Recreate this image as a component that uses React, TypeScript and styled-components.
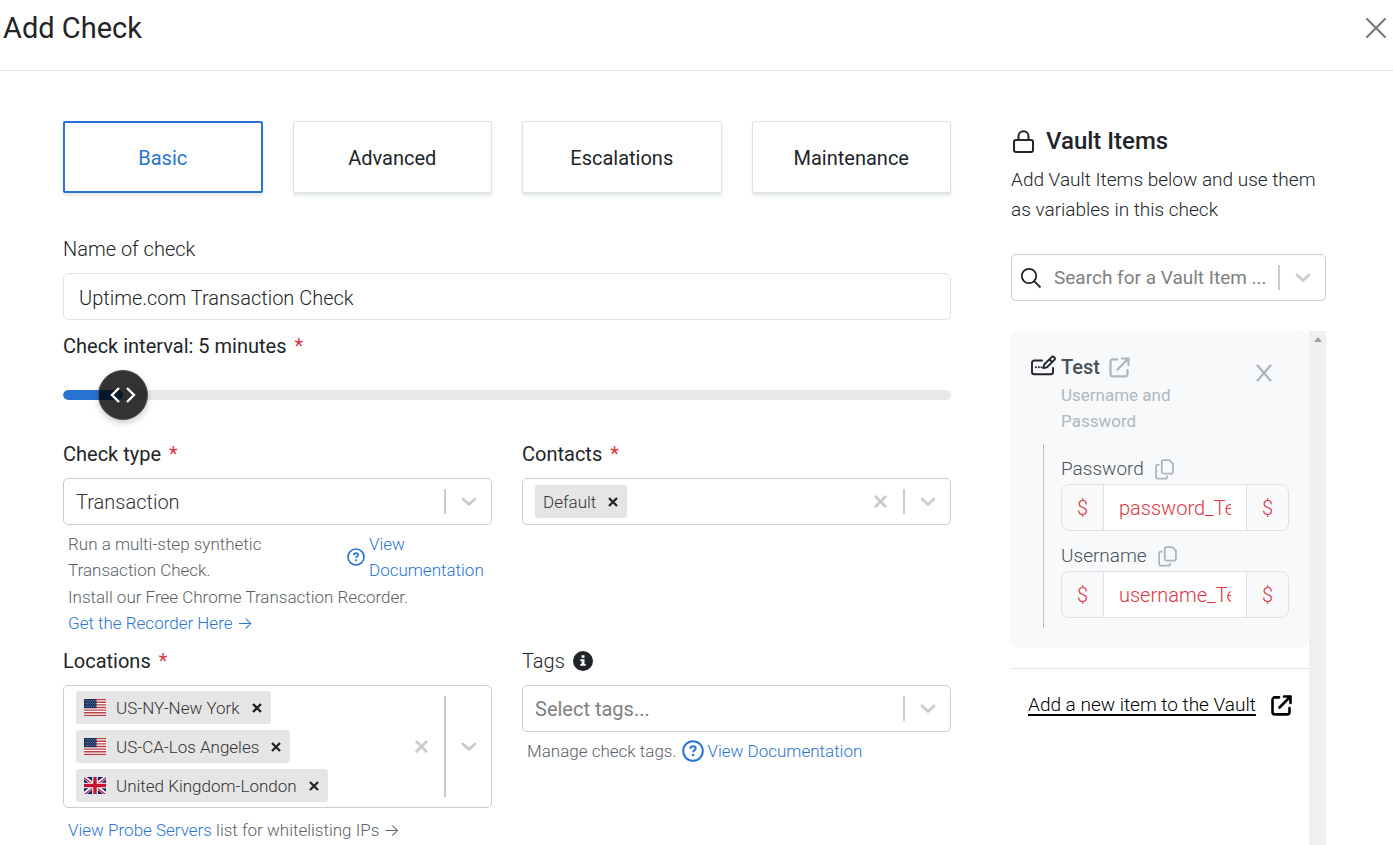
import React, { useState } from "react";
import styled, { createGlobalStyle } from "styled-components";

const Global = createGlobalStyle`
  *, *::before, *::after { box-sizing: border-box; }
  html, body { margin: 0; background: #fff; }
  body { font-family: Roboto, "Liberation Sans", sans-serif; font-size: 20px; line-height: 30px; font-weight: 300; color: #212529; }
  button, input, select { font: inherit; color: inherit; margin: 0; }
  button { background: none; border: 0; padding: 0; cursor: pointer; }
  h1, h2, h3, p, ul { margin: 0; padding: 0; }
  svg { display: block; flex: none; }
  a { color: #2974d3; text-decoration: none; }
`;

const Page = styled.div`
  min-height: 100vh;
  display: flex;
  flex-direction: column;
`;
const Header = styled.header`
  display: flex;
  justify-content: space-between;
  align-items: center;
  padding: 8px 7px 22px 3px;
  border-bottom: 1px solid #dee2e6;
`;
const Title = styled.h1`
  font-size: 29px;
  line-height: 40px;
  font-weight: 400;
`;
const Body = styled.div`
  flex: 1;
  display: grid;
  grid-template-columns: minmax(0, 1fr) 315px;
  column-gap: 60px;
  padding: 50px 67px 0 63px;
`;
const Form = styled.form`
  min-width: 0;
`;
const Tabs = styled.div`
  display: grid;
  grid-template-columns: repeat(4, 1fr);
  gap: 30px;
  margin-bottom: 41px;
`;
const Tab = styled.button<{ $active?: boolean }>`
  height: 72px;
  padding-top: 2px;
  font-weight: 400;
  color: ${(p) => (p.$active ? "#2974d3" : "#212529")};
  background: #fff;
  border: ${(p) => (p.$active ? "2px solid #2974d3" : "1px solid #dce1e6")};
  border-radius: 2px;
  box-shadow: 0 3px 3px rgba(60, 80, 100, 0.12);
`;
const Label = styled.label<{ $strong?: boolean }>`
  display: flex;
  align-items: center;
  gap: 8px;
  margin-bottom: 9px;
  font-weight: ${(p) => (p.$strong ? 400 : 300)};
`;
const Star = styled.span`
  color: #dc3545;
`;
const NameInput = styled.input`
  display: block;
  width: 100%;
  height: 47px;
  padding: 2px 15px 0;
  margin-bottom: 11px;
  border: 1px solid #dee2e6;
  border-radius: 6px;
  background: #fff;
`;
const Slider = styled.div`
  position: relative;
  height: 50px;
  margin-bottom: 19px;
  display: flex;
  align-items: center;
`;
const Track = styled.div`
  flex: 1;
  height: 10px;
  border-radius: 5px;
  background: #e8e8e8;
  overflow: hidden;
`;
const Fill = styled.div`
  height: 100%;
  border-radius: 5px;
  background: #2974d3;
`;
const Range = styled.input`
  appearance: none;
  position: absolute;
  inset: 0;
  width: 100%;
  height: 50px;
  background: transparent;
  &::-webkit-slider-thumb {
    appearance: none;
    width: 50px;
    height: 50px;
    border-radius: 50%;
    background: rgba(0, 0, 0, 0.8);
    border: 1px solid #495057;
    box-shadow: 0 3px 6px rgba(0, 0, 0, 0.2);
  }
`;
const Grip = styled.svg`
  position: absolute;
  transform: translateX(-50%);
  pointer-events: none;
`;
const Fields = styled.div`
  display: grid;
  grid-template-columns: repeat(2, minmax(0, 1fr));
  column-gap: 30px;
  row-gap: 10px;
`;
const Field = styled.div`
  min-width: 0;
`;
const Control = styled.div`
  display: flex;
  align-items: stretch;
  min-height: 47px;
  border: 1px solid #ccc;
  border-radius: 5px;
  background: #fff;
`;
const Select = styled.select<{ $muted?: boolean; $small?: boolean }>`
  appearance: none;
  flex: 1;
  min-width: 0;
  padding: 0 0 0 12px;
  border: 0;
  background: transparent;
  font-size: ${(p) => (p.$small ? 19 : 20)}px;
  font-weight: ${(p) => (p.$muted ? 400 : 300)};
  color: ${(p) => (p.$muted ? "#808080" : "#333")};
`;
const Divider = styled.span`
  width: 2px;
  margin: 10px 0;
  background: #ccc;
`;
const Toggle = styled.span`
  width: 45px;
  display: flex;
  align-items: center;
  justify-content: center;
  color: #ccc;
`;
const IconButton = styled.button`
  width: 45px;
  display: flex;
  align-items: center;
  justify-content: center;
  color: #ccc;
`;
const Chips = styled.ul`
  && { padding: 5px 12px; }
  flex: 1;
  display: flex;
  flex-direction: column;
  align-items: flex-start;
  justify-content: center;
  gap: 6px;
  list-style: none;
`;
const Chip = styled.li`
  display: flex;
  align-items: center;
  height: 33px;
  padding-left: 8px;
  border-radius: 3px;
  background: #e5e5e5;
  font-size: 17px;
  color: #333;
  svg + span { margin-left: 10px; }
`;
const ChipRemove = styled.button`
  width: 28px;
  height: 33px;
  margin-left: 3px;
  display: flex;
  align-items: center;
  justify-content: center;
  color: #212529;
`;
const Help = styled.div<{ $loose?: boolean }>`
  display: grid;
  row-gap: 1px;
  padding: ${(p) => (p.$loose ? 9 : 6)}px 5px 0;
  font-size: 17px;
  line-height: 26px;
  color: #5c6166;
`;
const HelpRow = styled.div<{ $spread?: boolean }>`
  display: flex;
  align-items: center;
  gap: 5px;
  justify-content: ${(p) => (p.$spread ? "space-between" : "flex-start")};
`;
const HelpText = styled.p`
  max-width: 220px;
`;
const Arrow = styled.span`
  font-family: Inter, "DejaVu Sans", sans-serif;
`;
const DocLink = styled.a<{ $narrow?: boolean }>`
  display: flex;
  align-items: center;
  gap: 4px;
  width: ${(p) => (p.$narrow ? "140px" : "auto")};
`;
const Side = styled.aside`
  display: flex;
  flex-direction: column;
  min-width: 0;
`;
const SideTitle = styled.h2`
  display: flex;
  align-items: center;
  gap: 10px;
  margin-bottom: 4px;
  font-size: 24px;
  line-height: 40px;
  font-weight: 500;
`;
const SideText = styled.p`
  margin-bottom: 29px;
  font-size: 19px;
`;
const SearchControl = styled(Control)`
  margin-bottom: 30px;
  & > svg { align-self: center; margin-left: 8px; }
`;
const ListArea = styled.div`
  flex: 1;
  display: flex;
`;
const List = styled.div`
  flex: 1;
  min-width: 0;
`;
const ScrollBar = styled.div`
  width: 17px;
  padding-top: 6px;
  display: flex;
  justify-content: center;
  background: #f0f0f0;
`;
const Card = styled.section`
  padding: 21px 20px 20px;
  border-radius: 8px;
  background: #f8f9fb;
`;
const CardHead = styled.div`
  display: flex;
  align-items: flex-start;
  gap: 5px;
  padding-bottom: 10px;
  & > svg { margin-top: 3px; }
`;
const CardInfo = styled.div`
  flex: 1;
`;
const CardTitle = styled.h3`
  display: flex;
  align-items: center;
  gap: 9px;
  font-size: 20px;
  font-weight: 500;
  color: #495057;
  a { color: #adb5bd; }
`;
const CardKind = styled.p`
  max-width: 120px;
  font-size: 17px;
  line-height: 26px;
  font-weight: 400;
  color: #b0b7bf;
`;
const RemoveItem = styled.button`
  width: 50px;
  height: 42px;
  display: flex;
  align-items: center;
  justify-content: center;
  color: #adb5bd;
`;
const Variables = styled.div`
  margin-left: 12px;
  padding: 10px 0 10px 17px;
  border-left: 1px solid #babfc5;
  display: grid;
  grid-template-columns: minmax(0, 1fr);
  gap: 10px;
`;
const VarLabel = styled.div`
  display: flex;
  align-items: center;
  gap: 11px;
  font-size: 19px;
  color: #495057;
  button { color: #adb5bd; }
`;
const Group = styled.div`
  display: flex;
  height: 47px;
  border: 1px solid #dee2e6;
  border-radius: 8px;
  overflow: hidden;
  color: #dc3545;
`;
const Affix = styled.span`
  width: 41px;
  flex: none;
  display: flex;
  align-items: center;
  justify-content: center;
`;
const VarInput = styled.input`
  flex: 1;
  min-width: 0;
  padding: 0 15px;
  border: solid #dee2e6;
  border-width: 0 1px;
  border-radius: 0;
  background: #fff;
`;
const AddRow = styled.div`
  margin-top: 20px;
  padding: 21px 17px 0;
  border-top: 1px solid #dee2e6;
`;
const AddLink = styled.a`
  display: flex;
  align-items: center;
  justify-content: space-between;
  color: #000;
  font-size: 19px;
  white-space: nowrap;
  span { text-decoration: underline; text-decoration-thickness: 2px; text-underline-offset: 3px; }
`;

const Chevron = () => (
  <svg width="16" height="10" viewBox="0 0 16 10" fill="none" stroke="currentColor" strokeWidth="2.8" strokeLinecap="round" strokeLinejoin="round"><path d="M2 2l6 5.4L14 2" /></svg>
);
const Cross = () => (
  <svg width="13" height="13" viewBox="0 0 13 13" fill="none" stroke="currentColor" strokeWidth="3" strokeLinecap="round"><path d="M1.8 1.8l9.4 9.4M11.2 1.8l-9.4 9.4" /></svg>
);
const RemoveCross = () => (
  <svg width="16" height="18" viewBox="0 0 16 18" fill="none" stroke="currentColor" strokeWidth="2.2" strokeLinecap="round"><path d="M1.5 1.5l13 15M14.5 1.5l-13 15" /></svg>
);
const ChipCross = () => (
  <svg width="10" height="10" viewBox="0 0 10 10" fill="none" stroke="currentColor" strokeWidth="2.3"><path d="M1 1l8 8M9 1l-8 8" /></svg>
);
const HelpIcon = ({ size }: { size: number }) => (
  <svg width={size} height={size} viewBox="0 0 22 22" fill="none" stroke="currentColor" strokeWidth="2"><circle cx="11" cy="11" r="9.8" /><path d="M8.3 8.8c0-1.7 1.2-2.5 2.7-2.5s2.7.9 2.7 2.2c0 1.8-2.6 1.8-2.6 3.7" /><path d="M11.1 13.9v2.2" strokeWidth="2.3" /></svg>
);
const InfoIcon = () => (
  <svg width="20" height="20" viewBox="0 0 20 20"><circle cx="10" cy="10" r="10" fill="#212529" /><path fill="#fff" d="M8.6 4.2h2.9v2.5H8.6zM7.3 8.2h4.2v4.7h1.2v1.9H7.3v-1.9h1.3v-2.8H7.3z" /></svg>
);
const ExternalIcon = ({ weight = 2.2 }: { weight?: number }) => (
  <svg width="21" height="21" viewBox="0 0 21 21" fill="none" stroke="currentColor" strokeWidth={weight} strokeLinecap="round" strokeLinejoin="round"><path d="M8 2.4H3.8c-1.3 0-2.3 1-2.3 2.3v12.4c0 1.3 1 2.3 2.3 2.3h12.4c1.3 0 2.3-1 2.3-2.3V13" /><path d="M8.5 12.5l11-11M13 1.5h6.5V8" /></svg>
);
const CopyIcon = () => (
  <svg width="19" height="21" viewBox="0 0 19 21" fill="none" stroke="currentColor" strokeWidth="1.8" strokeLinecap="round" strokeLinejoin="round"><path d="M8.7 1.2h5.6l3.6 3.4v8.1c0 1.1-.8 1.9-1.9 1.9H8.7c-1.1 0-1.9-.8-1.9-1.9V3.1c0-1.1.8-1.9 1.9-1.9z" /><path d="M3.8 5.700H3c-1.1 0-1.900.8-1.900 1.900v10.200c0 1.100.8 1.900 1.900 1.900h7.300c1.100 0 1.900-.8 1.900-1.900v-.3" /></svg>
);
const LockIcon = () => (
  <svg width="25" height="25" viewBox="0 0 25 25" fill="none" stroke="currentColor" strokeWidth="2"><rect x="3" y="11" width="19" height="12" rx="2" /><path d="M7.500 11V7.200a5 5 0 0 1 10 0V11" /></svg>
);
const SearchIcon = () => (
  <svg width="22" height="22" viewBox="0 0 22 22" fill="none" stroke="#212529" strokeWidth="1.800"><circle cx="9" cy="9" r="7.200" /><path d="M14.200 14.200l6.300 6.300" /></svg>
);
const CredentialIcon = () => (
  <svg width="25" height="21" viewBox="0 0 25 21" fill="none" stroke="currentColor" strokeWidth="1.900" strokeLinecap="round" strokeLinejoin="round"><path d="M11 5.500H3.400C2 5.500 1 6.400 1 7.800v9.100c0 1.300 1 2.300 2.400 2.300h16.300c1.300 0 2.300-1 2.300-2.300v-4" /><path d="M13.200 9.500l7.500-7.400c1.500-1.500 4.300 1 2.700 2.800l-7.500 7.400-3.500.9zM18.500 4.300l2.700 2.800" /><path d="M4.800 12.300h.1M7.800 12.300h.1M10.500 12.300h.1" strokeWidth="2" /></svg>
);
const UsFlag = () => (
  <svg width="22" height="17" viewBox="0 0 22 17"><path fill="#fff" d="M0 0h22v17H0z" /><path stroke="#bd3d44" strokeWidth="1.300" d="M0 .65h22M0 3.270h22M0 5.880h22M0 8.500h22M0 11.120h22M0 13.730h22M0 16.350h22" /><path fill="#192f5d" d="M0 0h12.500v9.150H0z" /><path stroke="#8c97ae" strokeWidth=".8" strokeDasharray=".8 1.200" d="M1 1.500h11M2 3h10M1 4.500h11M2 6h10M1 7.500h11" /></svg>
);
const UkFlag = () => (
  <svg width="22" height="17" viewBox="0 0 22 17"><path fill="#012169" d="M0 0h22v17H0z" /><path stroke="#fff" strokeWidth="3.400" d="M0 0l22 17M22 0L0 17" /><path stroke="#c8102e" strokeWidth="1.300" d="M0 .7l22 17M22 .7L0 17.700" /><path stroke="#fff" strokeWidth="5.600" d="M11 0v17M0 8.500h22" /><path stroke="#c8102e" strokeWidth="3.400" d="M11 0v17M0 8.500h22" /></svg>
);

const TABS = ["Basic", "Advanced", "Escalations", "Maintenance"];
const LOCATIONS = [
  { name: "US-NY-New York", Flag: UsFlag },
  { name: "US-CA-Los Angeles", Flag: UsFlag },
  { name: "United Kingdom-London", Flag: UkFlag },
];
const VARIABLES = [
  { label: "Password", value: "password_Test" },
  { label: "Username", value: "username_Test" },
];
const MAX_INTERVAL = 120;

function MultiControl({ children, label }: { children: React.ReactNode; label: string }) {
  return (
    <Control role="group" aria-label={label}>
      <Chips>{children}</Chips>
      <IconButton type="button" aria-label={`Clear ${label}`}><Cross /></IconButton>
      <Divider />
      <IconButton type="button" aria-label={`Open ${label}`}><Chevron /></IconButton>
    </Control>
  );
}

export default function App() {
  const [tab, setTab] = useState("Basic");
  const [minutes, setMinutes] = useState(5);
  const ratio = minutes / MAX_INTERVAL;
  const thumb = `calc(25px + (100% - 50px) * ${ratio})`;
  return (
    <Page>
      <Global />
      <Header>
        <Title>Add Check</Title>
        <button type="button" aria-label="Close">
          <svg width="20" height="20" viewBox="0 0 20 20" fill="none" stroke="#777" strokeWidth="2" strokeLinecap="round"><path d="M1 1l18 18M19 1L1 19" /></svg>
        </button>
      </Header>
      <Body>
        <Form>
          <Tabs>
            {TABS.map((t) => (
              <Tab key={t} type="button" $active={t === tab} onClick={() => setTab(t)}>{t}</Tab>
            ))}
          </Tabs>
          <Label htmlFor="name">Name of check</Label>
          <NameInput id="name" defaultValue="Uptime.com Transaction Check" />
          <Label htmlFor="interval" $strong>Check interval: {minutes} minutes<Star>*</Star></Label>
          <Slider>
            <Track><Fill style={{ width: thumb }} /></Track>
            <Range id="interval" type="range" min={0} max={MAX_INTERVAL} value={minutes} onChange={(e) => setMinutes(Number(e.target.value))} />
            <Grip style={{ left: thumb }} width="28" height="18" viewBox="0 0 28 18" fill="none" stroke="#fff" strokeWidth="2.4"><path d="M10 2L3 9l7 7M18 2l7 7-7 7" /></Grip>
          </Slider>
          <Fields>
            <Field>
              <Label htmlFor="type" $strong>Check type<Star>*</Star></Label>
              <Control>
                <Select id="type"><option>Transaction</option></Select>
                <Divider />
                <Toggle><Chevron /></Toggle>
              </Control>
              <Help>
                <HelpRow $spread>
                  <HelpText>Run a multi-step synthetic Transaction Check.</HelpText>
                  <DocLink href="#docs" $narrow><HelpIcon size={18} /><span>View Documentation</span></DocLink>
                </HelpRow>
                <div>
                  <p>Install our Free Chrome Transaction Recorder.</p>
                  <a href="#recorder">Get the Recorder Here <Arrow>→</Arrow></a>
                </div>
              </Help>
            </Field>
            <Field>
              <Label as="div" $strong>Contacts<Star>*</Star></Label>
              <MultiControl label="Contacts">
                <Chip><span>Default</span><ChipRemove type="button" aria-label="Remove Default"><ChipCross /></ChipRemove></Chip>
              </MultiControl>
            </Field>
            <Field>
              <Label as="div" $strong>Locations<Star>*</Star></Label>
              <MultiControl label="Locations">
                {LOCATIONS.map(({ name, Flag }) => (
                  <Chip key={name}><Flag /><span>{name}</span><ChipRemove type="button" aria-label={`Remove ${name}`}><ChipCross /></ChipRemove></Chip>
                ))}
              </MultiControl>
              <Help $loose><p><a href="#probes">View Probe Servers</a> list for whitelisting IPs <Arrow>→</Arrow></p></Help>
            </Field>
            <Field>
              <Label htmlFor="tags">Tags<InfoIcon /></Label>
              <Control>
                <Select id="tags" $muted><option>Select tags...</option></Select>
                <Divider />
                <Toggle><Chevron /></Toggle>
              </Control>
              <Help>
                <HelpRow>
                  <span>Manage check tags.</span>
                  <DocLink href="#tags-docs"><HelpIcon size={22} /><span>View Documentation</span></DocLink>
                </HelpRow>
              </Help>
            </Field>
          </Fields>
        </Form>
        <Side>
          <SideTitle><LockIcon />Vault Items</SideTitle>
          <SideText>Add Vault Items below and use them as variables in this check</SideText>
          <SearchControl>
            <SearchIcon />
            <Select aria-label="Search for a Vault Item" $muted $small><option>Search for a Vault Item ...</option></Select>
            <Divider />
            <Toggle><Chevron /></Toggle>
          </SearchControl>
          <ListArea>
            <List>
              <Card>
                <CardHead>
                  <CredentialIcon />
                  <CardInfo>
                    <CardTitle>Test<a href="#test" aria-label="Open Test"><ExternalIcon /></a></CardTitle>
                    <CardKind>Username and Password</CardKind>
                  </CardInfo>
                  <RemoveItem type="button" aria-label="Remove Test"><RemoveCross /></RemoveItem>
                </CardHead>
                <Variables>
                  {VARIABLES.map((v) => (
                    <div key={v.label}>
                      <VarLabel>
                        <label htmlFor={v.label}>{v.label}</label>
                        <button type="button" aria-label={`Copy ${v.label}`}><CopyIcon /></button>
                      </VarLabel>
                      <Group>
                        <Affix>$</Affix>
                        <VarInput id={v.label} readOnly value={v.value} />
                        <Affix>$</Affix>
                      </Group>
                    </div>
                  ))}
                </Variables>
              </Card>
              <AddRow>
                <AddLink href="#new"><span>Add a new item to the Vault</span><ExternalIcon weight={2.6} /></AddLink>
              </AddRow>
            </List>
            <ScrollBar aria-hidden="true"><svg width="8" height="5" viewBox="0 0 8 5"><path fill="#a3a3a3" d="M4 0l4 5H0z" /></svg></ScrollBar>
          </ListArea>
        </Side>
      </Body>
    </Page>
  );
}
